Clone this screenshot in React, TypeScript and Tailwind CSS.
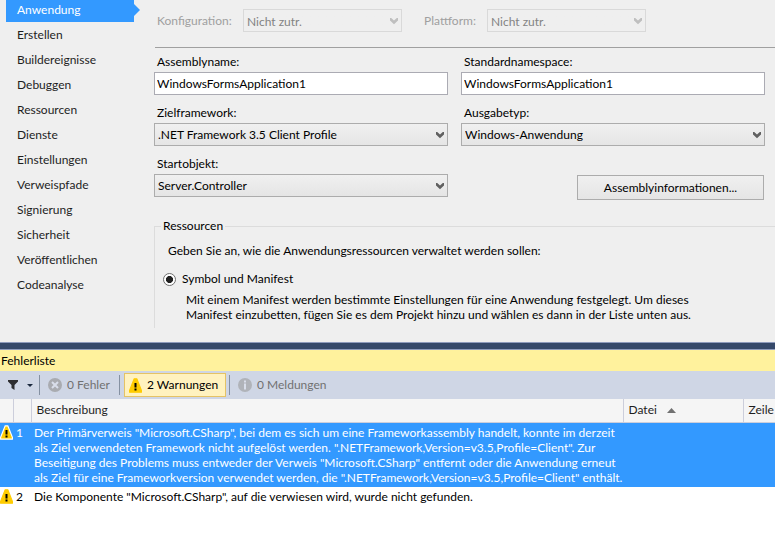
import React from 'react';

const NAV_ITEMS = [
  'Anwendung',
  'Erstellen',
  'Buildereignisse',
  'Debuggen',
  'Ressourcen',
  'Dienste',
  'Einstellungen',
  'Verweispfade',
  'Signierung',
  'Sicherheit',
  'Veröffentlichen',
  'Codeanalyse',
];

const ERRORS = [
  {
    id: 1,
    selected: true,
    lines: [
      'Der Primärverweis "Microsoft.CSharp", bei dem es sich um eine Frameworkassembly handelt, konnte im derzeit',
      'als Ziel verwendeten Framework nicht aufgelöst werden. ".NETFramework,Version=v3.5,Profile=Client". Zur',
      'Beseitigung des Problems muss entweder der Verweis "Microsoft.CSharp" entfernt oder die Anwendung erneut',
      'als Ziel für eine Frameworkversion verwendet werden, die ".NETFramework,Version=v3.5,Profile=Client" enthält.',
    ],
  },
  {
    id: 2,
    selected: false,
    lines: ['Die Komponente "Microsoft.CSharp", auf die verwiesen wird, wurde nicht gefunden.'],
  },
];

const WarningIcon = ({ outlined = false }: { outlined?: boolean }) => (
  <svg width="13" height="15" viewBox="0 0 13 15" className="block shrink-0">
    <path
      d="M5.2 .8h2.6L12.4 12.4v1.8H.6v-1.8z"
      fill="#ffcc00"
      stroke={outlined ? '#ffffff' : '#ffcc00'}
      strokeWidth="1.2"
      strokeLinejoin="round"
    />
    <path d="M5.5 5h2v4.5h-2zM5.5 10.5h2v2h-2z" fill="#000000" />
  </svg>
);

const Chevron = ({ disabled = false }: { disabled?: boolean }) => (
  <svg
    width="8"
    height="7"
    viewBox="0 0 8 7"
    className="pointer-events-none absolute right-1 top-[9px]"
  >
    <path d="M0 0h1.2L4 2.6 6.800 0H8v2.600L4 6.200 0 2.600z" fill={disabled ? '#bfbfbf' : '#606060'} />
  </svg>
);

interface SelectBoxProps {
  id: string;
  value: string;
  disabled?: boolean;
}

const SelectBox: React.FC<SelectBoxProps> = ({ id, value, disabled }) => (
  <div className="relative">
    <select
      id={id}
      disabled={disabled}
      className="block h-[23px] w-full appearance-none border border-[#acacac] bg-linear-to-b from-[#f0f0f0] to-[#e5e5e5] pl-[3px] pr-4 text-black disabled:border-[#d9d9d9] disabled:from-[#efefef] disabled:to-[#efefef] disabled:text-[#838383] disabled:opacity-100"
    >
      <option>{value}</option>
    </select>
    <Chevron disabled={disabled} />
  </div>
);

interface FieldProps {
  id: string;
  label: string;
  children: React.ReactNode;
}

const Field: React.FC<FieldProps> = ({ id, label, children }) => (
  <div>
    <label htmlFor={id} className="block h-5 pl-[3px] leading-5">
      {label}
    </label>
    {children}
  </div>
);

const TextBox = ({ id, value }: { id: string; value: string }) => (
  <input
    id={id}
    type="text"
    defaultValue={value}
    className="block h-[23px] w-full border border-[#ababb3] bg-white px-0.5 text-black"
  />
);

const Sidebar = () => (
  <nav className="w-[154px] shrink-0 overflow-hidden pl-1.5">
    <ul className="-mt-[3px]">
      {NAV_ITEMS.map((item, index) => (
        <li key={item} className="flex h-[25px]">
          <a
            href="#"
            className={
              index === 0
                ? 'w-32 bg-[#3399ff] pl-[11px] leading-[25px] text-white'
                : 'w-32 pl-[11px] leading-[25px] text-[#1e1e1e]'
            }
          >
            {item}
          </a>
          {index === 0 && (
            <svg width="6" height="25" viewBox="0 0 6 25">
              <path d="M0 7l6 6-6 6z" fill="#3399ff" />
            </svg>
          )}
        </li>
      ))}
    </ul>
  </nav>
);

const PropertyPage = () => (
  <main className="min-w-0 flex-1">
    <div className="ml-px flex h-12 items-start border-b border-[#a0a0a0] pt-[9px] leading-[23px] text-[#a0a0a0]">
      <label htmlFor="config" className="w-[88px] pl-0.5">
        Konfiguration:
      </label>
      <div className="w-[159px]">
        <SelectBox id="config" value="Nicht zutr." disabled />
      </div>
      <label htmlFor="platform" className="ml-[22px] w-[63px]">
        Plattform:
      </label>
      <div className="w-[159px]">
        <SelectBox id="platform" value="Nicht zutr." disabled />
      </div>
    </div>

    <div className="grid grid-cols-[294fr_304fr] gap-x-[13px] gap-y-2 pr-2.5 pt-1">
      <Field id="assembly" label="Assemblyname:">
        <TextBox id="assembly" value="WindowsFormsApplication1" />
      </Field>
      <Field id="namespace" label="Standardnamespace:">
        <TextBox id="namespace" value="WindowsFormsApplication1" />
      </Field>
      <Field id="framework" label="Zielframework:">
        <SelectBox id="framework" value=".NET Framework 3.5 Client Profile" />
      </Field>
      <Field id="output" label="Ausgabetyp:">
        <SelectBox id="output" value="Windows-Anwendung" />
      </Field>
      <Field id="startup" label="Startobjekt:">
        <SelectBox id="startup" value="Server.Controller" />
      </Field>
      <div className="flex justify-end pr-px pt-[21px]">
        <button
          type="button"
          className="h-[25px] w-[187px] border border-[#acacac] bg-linear-to-b from-[#f0f0f0] to-[#e5e5e5]"
        >
          Assemblyinformationen...
        </button>
      </div>
    </div>

    {/* Resources group, continues below the visible part of the page */}
    <fieldset className="mt-4 h-28 border-l border-t border-[#dcdcdc] pl-2">
      <legend className="-ml-0.5 px-0.5 leading-5">Ressourcen</legend>
      <p className="pl-[5px] pt-[5px] leading-5">
        Geben Sie an, wie die Anwendungsressourcen verwaltet werden sollen:
      </p>
      <div className="mt-2 flex items-center gap-1.5 leading-5">
        <input
          id="manifest"
          type="radio"
          name="resources"
          defaultChecked
          className="size-[13px] appearance-none rounded-full border border-[#707070] bg-[radial-gradient(closest-side,#212121_58%,#ffffff_70%)]"
        />
        <label htmlFor="manifest">Symbol und Manifest</label>
      </div>
      <p className="pl-[23px] pt-[3px] leading-[15px]">
        Mit einem Manifest werden bestimmte Einstellungen für eine Anwendung festgelegt. Um dieses
        <br />
        Manifest einzubetten, fügen Sie es dem Projekt hinzu und wählen es dann in der Liste unten aus.
      </p>
    </fieldset>
  </main>
);

const Separator = () => <div className="h-5 w-px bg-[#8591a2]" />;

const Toolbar = () => (
  <div className="flex h-7 items-center bg-[#cfd6e5] text-[#717171]">
    <button type="button" aria-label="Filter" className="flex h-6 w-[39px] items-center pl-2">
      <svg width="26" height="10" viewBox="0 0 26 10">
        <path d="M0 0h10v1.5L6.5 5v5L3.5 8V5L0 1.5z" fill="#2d2d30" />
        <path d="M19 4h6l-3 3z" fill="#1b293e" />
      </svg>
    </button>
    <Separator />
    <button type="button" className="flex h-6 w-[79px] items-center gap-[5px] pl-2">
      <svg width="14" height="14" viewBox="0 0 14 14">
        <circle cx="7" cy="7" r="7" fill="#a9abb0" />
        <path d="M4 4l6 6M10 4l-6 6" stroke="#d9deea" strokeWidth="2" />
      </svg>
      0 Fehler
    </button>
    <Separator />
    <button
      type="button"
      className="ml-1 flex h-6 w-[102px] items-center gap-[5px] border border-[#e5c365] bg-[#fff2bf] pl-1 text-black"
    >
      <WarningIcon />
      2 Warnungen
    </button>
    <div className="ml-[3px]">
      <Separator />
    </div>
    <button type="button" className="flex h-6 items-center gap-[5px] pl-2">
      <svg width="14" height="14" viewBox="0 0 14 14">
        <circle cx="7" cy="7" r="7" fill="#b0b3b9" />
        <path d="M6 2.5h2v2H6zM6 5.5h2v6H6z" fill="#d9deea" />
      </svg>
      0 Meldungen
    </button>
  </div>
);

const ErrorTable = () => (
  <table className="w-full table-fixed border-collapse text-left">
    <colgroup>
      <col className="w-[13px]" />
      <col className="w-[18px]" />
      <col />
      <col className="w-[120px]" />
      <col className="w-8" />
    </colgroup>
    <thead>
      <tr className="h-[23px] border-b border-[#cccedb] bg-[#f5f5f5] text-[#1e1e1e]">
        <th className="border-r border-[#cccedb] p-0" aria-label="Symbol" />
        <th className="border-r border-[#cccedb] p-0" aria-label="Nummer" />
        <th className="border-r border-[#cccedb] p-0 pl-[5px] font-normal">Beschreibung</th>
        <th className="border-r border-[#cccedb] p-0 pl-[5px] font-normal">
          <span className="flex items-center gap-2.5">
            Datei
            <svg width="9" height="5" viewBox="0 0 9 5">
              <path d="M4.5 0L9 5H0z" fill="#717171" />
            </svg>
          </span>
        </th>
        <th className="p-0 pl-[5px] font-normal">Zeile</th>
      </tr>
    </thead>
    <tbody className="leading-[15px]">
      {ERRORS.map((error) => (
        <tr
          key={error.id}
          className={error.selected ? 'bg-[#3399ff] align-top text-white' : 'bg-white align-top text-black'}
        >
          <td className="p-0 pt-0.5">
            <WarningIcon outlined={error.selected} />
          </td>
          <td className="p-0 py-0.5 pl-[3px]">{error.id}</td>
          <td className="whitespace-nowrap p-0 py-0.5 pl-[3px]">
            {error.lines.map((line) => (
              <div key={line}>{line}</div>
            ))}
          </td>
          <td className="p-0" />
          <td className="p-0" />
        </tr>
      ))}
    </tbody>
  </table>
);

export default function App() {
  return (
    <div className="min-h-screen overflow-hidden bg-white font-['Lato','Noto_Sans',sans-serif] text-[12px] text-black">
      <div className="flex bg-[#efefef] pb-3.5">
        <Sidebar />
        <PropertyPage />
      </div>
      <div className="h-2 border-y border-[#8e9bbc] bg-[#35496a]" />
      <section>
        <h2 className="h-[21px] bg-[#fff29d] pl-px leading-[21px]">Fehlerliste</h2>
        <Toolbar />
        <ErrorTable />
      </section>
    </div>
  );
}
